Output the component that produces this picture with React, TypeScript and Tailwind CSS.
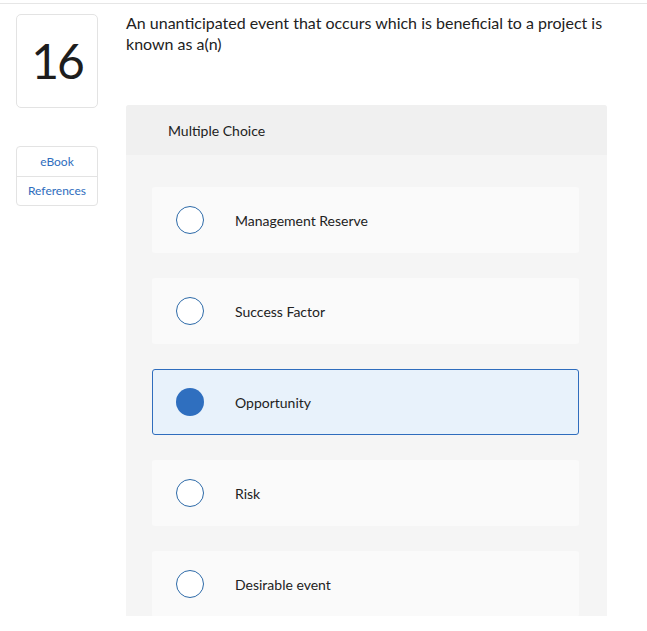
import React, { useState } from 'react';

const options = ['Management Reserve', 'Success Factor', 'Opportunity', 'Risk', 'Desirable event'];

const App: React.FC = () => {
  const [selected, setSelected] = useState(2);

  return (
    <div className="min-h-[631px] bg-white font-['Lato',sans-serif] text-[#222]">
      <div className="pt-[3px]">
        <div className="h-px bg-[#e6e6e6]"></div>
      </div>
      <div className="flex pl-4 pt-[10px]">
        {/* Left column */}
        <div className="w-[82px] shrink-0">
          <div className="h-[94px] rounded-[5px] border border-[#e3e3e3] flex items-center justify-center">
            <span className="text-[48px] leading-none tracking-[-2px] text-[#1d1d1d]">16</span>
          </div>
          <div className="mt-[38px] rounded-[4px] border border-[#e3e3e3] text-[12px] text-[#2f6dbd]">
            <div className="h-[30px] flex items-center justify-center border-b border-[#e3e3e3]">eBook</div>
            <div className="h-[28px] flex items-center justify-center">References</div>
          </div>
        </div>

        {/* Question */}
        <div className="ml-[28px] w-[481px]">
          <p className="text-[16px] leading-[21px] -mt-[2px]">
            An unanticipated event that occurs which is beneficial to a project is known as a(n)
          </p>
          <div className="mt-[51px] rounded-t-[3px] bg-[#f5f5f5] h-[511px] overflow-hidden">
            <div className="h-[50px] bg-[#f0f0f0] flex items-center pl-[42px] text-[14px]">Multiple Choice</div>
            <div className="pl-[26px] pr-[28px] pt-[32px] flex flex-col gap-[25px]">
              {options.map((opt, i) => {
                const isSel = selected === i;
                return (
                  <button
                    key={opt}
                    onClick={() => setSelected(i)}
                    className={`h-[66px] shrink-0 rounded-[3px] flex items-center text-left ${
                      isSel ? 'bg-[#e8f2fb] border border-[#2f6dbd] pl-[23px]' : 'bg-[#fafafa] pl-[24px]'
                    }`}
                  >
                    <span
                      className={`w-[28px] h-[28px] rounded-full shrink-0 ${
                        isSel ? 'bg-[#2f6fbf]' : 'bg-white border-[1.5px] border-[#2d6aa8]'
                      }`}
                    ></span>
                    <span className="ml-[31px] text-[14px] text-[#222]">{opt}</span>
                  </button>
                );
              })}
            </div>
          </div>
        </div>
      </div>
    </div>
  );
};

export default App;
